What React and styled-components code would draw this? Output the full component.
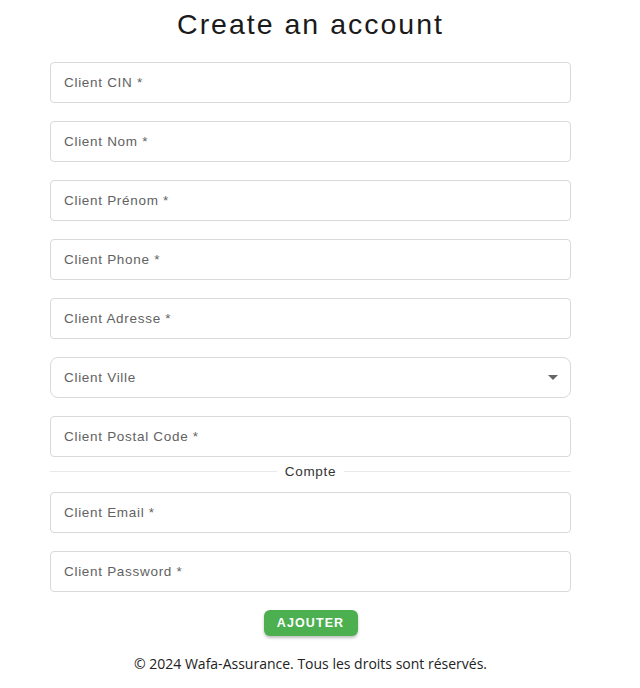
import React from 'react'
import styled, { createGlobalStyle } from 'styled-components';

const GlobalStyle = createGlobalStyle`
    body{
        margin: 0;
        background: #fff;
        font-family: "Liberation Sans", Arial, sans-serif;
    }
`;

const fields = [
    { label: 'Client CIN *' },
    { label: 'Client Nom *' },
    { label: 'Client Prénom *' },
    { label: 'Client Phone *' },
    { label: 'Client Adresse *' },
    { label: 'Client Ville', select: true },
    { label: 'Client Postal Code *' },
];

const account = [
    { label: 'Client Email *' },
    { label: 'Client Password *' },
];

function Field({ label, select }) {
    return (
        <FieldBox $select={select}>
            <span>{label}</span>
            {select && <Caret />}
        </FieldBox>
    )
}

function App() {
    return (
        <>
        <GlobalStyle />
        <PageStyled>
            <h1>Create an account</h1>
            <div className="form">
                {fields.map(f => <Field key={f.label} {...f} />)}
                <Divider><span>Compte</span></Divider>
                {account.map(f => <Field key={f.label} {...f} />)}
            </div>
            <Button>Ajouter</Button>
            <Footer>© 2024 Wafa-Assurance. Tous les droits sont réservés.</Footer>
        </PageStyled>
        </>
    )
}

const PageStyled = styled.div`
    width: 621px;
    display: flex;
    flex-direction: column;
    align-items: center;

    h1{
        margin: 8px 0 22px;
        font-size: 28.5px;
        font-weight: 400;
        color: #1a1a1a;
        line-height: 32px;
        letter-spacing: 2px;
    }

    .form{
        width: 521px;
        display: flex;
        flex-direction: column;
        gap: 18px;
    }
`;

const FieldBox = styled.div`
    height: 41px;
    box-sizing: border-box;
    border: 1px solid #d9d9d9;
    border-radius: ${p => p.$select ? '8px' : '4px'};
    display: flex;
    align-items: center;
    justify-content: space-between;
    padding: 0 12px 0 13px;
    font-size: 13.5px;
    letter-spacing: 0.7px;
    color: #626262;
`;

const Caret = styled.div`
    width: 0;
    height: 0;
    border-left: 5px solid transparent;
    border-right: 5px solid transparent;
    border-top: 5px solid #666;
`;

const Divider = styled.div`
    display: flex;
    align-items: center;
    gap: 8px;
    height: 17px;
    margin: -12px 0 -6px;
    font-size: 13.5px;
    color: #333;
    &::before, &::after{
        content: "";
        flex: 1;
        border-top: 1px solid #e8e8e8;
    }
    span{
        letter-spacing: 0.7px;
    }
`;

const Button = styled.button`
    margin-top: 18px;
    width: 94px;
    height: 26px;
    border: none;
    border-radius: 6px;
    background: #4caf50;
    color: #fff;
    font-family: "Liberation Sans", Arial, sans-serif;
    font-weight: 700;
    font-size: 12.5px;
    text-transform: uppercase;
    letter-spacing: 1.1px;
    box-shadow: 0 2px 3px rgba(0,0,0,0.25);
`;

const Footer = styled.p`
    margin: 18px 0 0;
    font-family: "Open Sans", sans-serif;
    font-size: 14px;
    color: #222;
`;

export default App;
